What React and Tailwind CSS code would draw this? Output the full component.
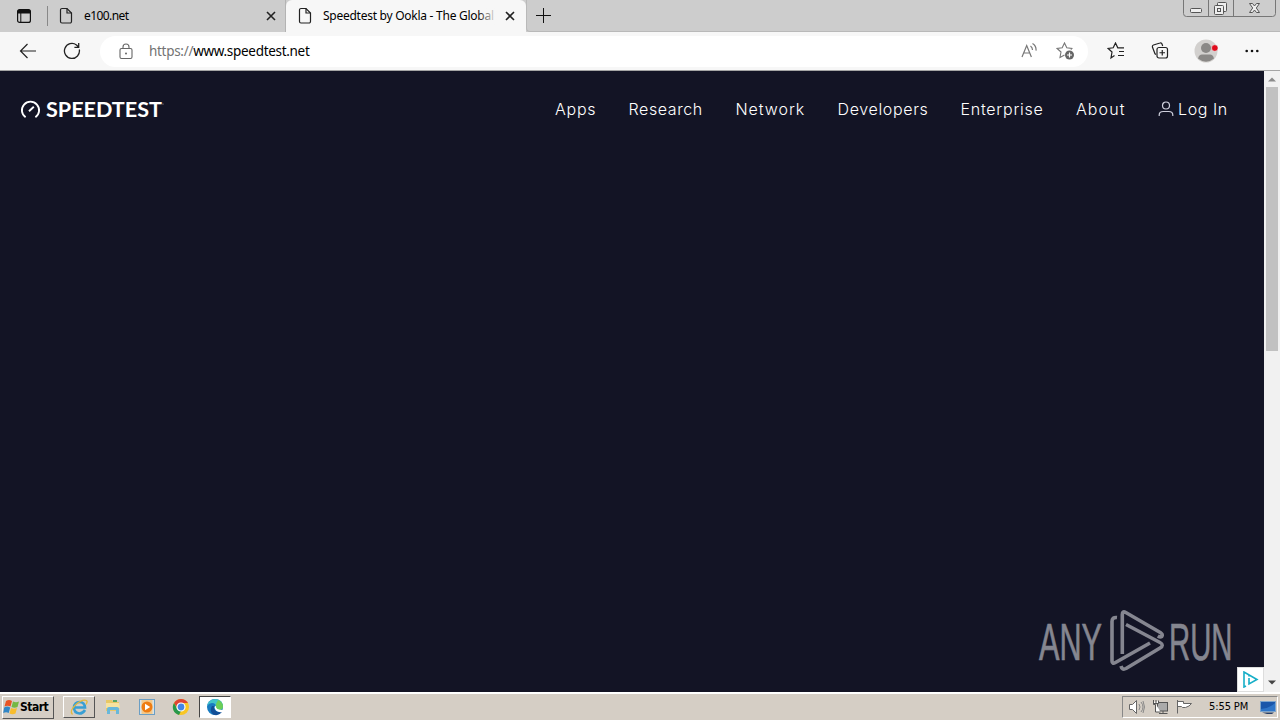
import React from "react";

const navItems = [
    { label: "Apps", width: "w-[73.5px]", tracking: "tracking-[0.75px]" },
    { label: "Research", width: "w-[107px]", tracking: "tracking-[0.6px]" },
    { label: "Network", width: "w-[102px]", tracking: "tracking-[0.95px]" },
    { label: "Developers", width: "w-[123px]", tracking: "tracking-[0.65px]" },
    { label: "Enterprise", width: "w-[115.5px]", tracking: "tracking-[0.75px]" },
    { label: "About", width: "w-[82px]", tracking: "tracking-[1.1px]" },
];

function PageIcon() {
    return (
        <svg className="shrink-0" width="14" height="18" viewBox="0 0 14 18" fill="none" stroke="#222" strokeWidth="1.2">
            <path d="M3 1.500h5l4.500 4.500v8.500a1.500 1.500 0 0 1-1.500 1.500H3a1.500 1.500 0 0 1-1.500-1.500V3A1.500 1.500 0 0 1 3 1.500z" />
            <path d="M8 1.500V6h4.500" />
        </svg>
    );
}

function CloseIcon() {
    return (
        <svg className="shrink-0" width="10" height="10" viewBox="0 0 10 10" stroke="#222" strokeWidth="1.6">
            <path d="M1 1l8 8M9 1L1 9" />
        </svg>
    );
}

function WindowButtons() {
    return (
        <svg className="ml-auto mr-1 shrink-0 self-start" width="93" height="18" viewBox="0 0 93 18" fill="none" stroke="#777">
            <path d="M.5 0v13.500a3 3 0 0 0 3 3h86a3 3 0 0 0 3-3V0M25.500 0v16M50.500 0v16" />
            <rect x="7.500" y="8.500" width="11" height="4" rx="1" fill="#eee" stroke="#555" />
            <g fill="#eee" stroke="#555">
                <rect x="34.500" y="2.500" width="9" height="9" rx="1" />
                <rect x="31.500" y="5.500" width="9" height="9" rx="1" />
                <rect x="34.500" y="8.500" width="3" height="3" />
            </g>
            <path d="M66.500 3.500h3l2 2.500 2-2.500h3l-3.200 4.500 3.200 4.500h-3l-2-2.500-2 2.500h-3l3.200-4.500z" fill="#eee" stroke="#555" />
        </svg>
    );
}

function TabStrip() {
    return (
        <div className="flex h-8 items-center bg-[#cdcdcd] text-[12px] text-black">
            <svg className="ml-4 shrink-0" width="16" height="16" viewBox="0 0 16 16">
                <rect x="1.600" y="1.600" width="12.800" height="12.800" rx="2" fill="none" stroke="#111" strokeWidth="1.200" />
                <path d="M1.500 5.500V3.500a2 2 0 0 1 2-2h9a2 2 0 0 1 2 2v2z" fill="#111" />
                <path d="M4.800 5v9" stroke="#111" />
            </svg>
            <div className="ml-[15px] h-5 w-px bg-[#888]" />
            <div className="flex h-full w-[238px] items-center border-r border-[#b3b3b3] pl-[11px]">
                <PageIcon />
                <span className="ml-[11px] w-[182px] tracking-[-0.58px]">e100.net</span>
                <CloseIcon />
            </div>
            <div className="flex h-full w-[240px] items-center rounded-t-md bg-[#f7f7f7] pl-[12px]">
                <PageIcon />
                <span className="relative ml-[11px] w-[174px] overflow-hidden whitespace-nowrap tracking-[-0.26px]">
                    Speedtest by Ookla - The Global I
                    <span className="absolute right-0 top-0 h-full w-5 bg-linear-to-r from-transparent to-[#f7f7f7]" />
                </span>
                <span className="ml-[8px]"><CloseIcon /></span>
            </div>
            <div className="flex h-full grow items-center rounded-bl border-b border-l border-[#b9b9b9]">
                <svg className="ml-[9px]" width="15" height="15" viewBox="0 0 15 15" stroke="#111">
                    <path d="M7.500 0v15M0 7.500h15" />
                </svg>
                <WindowButtons />
            </div>
        </div>
    );
}

function AddressBar() {
    return (
        <div className="flex h-[39px] items-center border-b border-[#a5a5a5] bg-[#f7f7f7]">
            <svg className="ml-[19px] shrink-0" width="18" height="16" viewBox="0 0 18 16" fill="none" stroke="#222" strokeWidth="1.200">
                <path d="M17 8H1.500M8.500 1L1.500 8l7 7" />
            </svg>
            <svg className="ml-[26px] shrink-0" width="18" height="18" viewBox="0 0 18 18" fill="none" stroke="#222" strokeWidth="1.300">
                <path d="M16.300 7.500A7.500 7.500 0 1 1 13.500 3l2 2M15.700 1v4.300h-4.300" />
            </svg>
            <div className="ml-[19px] flex h-[31px] w-[988px] items-center rounded-full bg-white">
                <svg className="ml-[19px] shrink-0" width="14" height="17" viewBox="0 0 14 17" fill="none" stroke="#666" strokeWidth="1.100">
                    <rect x="1" y="5.500" width="12" height="10" rx="1.500" />
                    <path d="M4 5.500V4a3 3 0 0 1 6 0v1.500" />
                    <circle cx="7" cy="10.500" r="1" fill="#666" stroke="none" />
                </svg>
                <span className="ml-4 text-[13.5px] tracking-[-0.3px] text-black">
                    <span className="text-[#737373]">https://</span>www.speedtest.net
                </span>
                <svg className="ml-auto shrink-0" width="17" height="16" viewBox="0 0 17 16" fill="none" stroke="#777" strokeWidth="1.200">
                    <path d="M2 14L6.700 2.500 11.400 14M3.600 10h6.200M10.500 3q2 1.500 2 4M12.500 .6q4 2.500 3.500 7" />
                </svg>
                <svg className="ml-[19px] mr-[13px] shrink-0" width="19" height="18" viewBox="0 0 19 18" fill="none" stroke="#777" strokeWidth="1.100">
                    <path d="M8.500 13L4 15.500l1-5.500-3.800-3.500 5-.7L8.500 1l2.300 4.800 5 .7-1 1" />
                    <circle cx="13.500" cy="13" r="4.500" fill="#666" stroke="none" />
                    <path d="M11 13h5M13.500 10.500v5" stroke="#fff" strokeWidth="1.200" />
                </svg>
            </div>
            <svg className="ml-[19px] shrink-0" width="19" height="18" viewBox="0 0 19 18" fill="none" stroke="#222" strokeWidth="1.200">
                <path d="M7.500 13.500L4 16l1-6-3.800-3.500 5-.7L8.500 1l2.300 4.800H17M12 9.500h5M11 13.500h6" />
            </svg>
            <svg className="ml-[25px] shrink-0" width="18" height="18" viewBox="0 0 18 18" fill="none" stroke="#222" strokeWidth="1.200">
                <path d="M5 12.500l-1-.7-2.500-6.500Q1 3.500 2.500 3L9 1q1.500-.5 2 1l.7 2" />
                <rect x="6" y="5.500" width="10.500" height="10.500" rx="2" />
                <path d="M11.250 8v5.500M8.500 10.750H14" />
            </svg>
            <svg className="ml-[25px] shrink-0" width="24" height="24" viewBox="0 0 24 24">
                <circle cx="12" cy="12" r="11.500" fill="#d2d0ce" />
                <circle cx="12" cy="9" r="5" fill="#8a8886" />
                <path d="M4 19.500Q5 15.500 8 15.500h8q3 0 4 4-8 6.500-16 0z" fill="#8a8886" />
                <circle cx="20.800" cy="9" r="3.300" fill="#e00b1c" stroke="#eee" strokeWidth=".6" />
            </svg>
            <svg className="ml-[27px]" width="14" height="4" viewBox="0 0 14 4" fill="#111">
                <circle cx="1.700" cy="2" r="1.300" />
                <circle cx="7" cy="2" r="1.300" />
                <circle cx="12.300" cy="2" r="1.300" />
            </svg>
        </div>
    );
}

function SiteHeader() {
    return (
        <header className="flex h-[78px] items-center text-white">
            <svg className="ml-5 overflow-visible" width="146" height="28" viewBox="0 -3 146 28" fill="none" stroke="#fff" strokeWidth="1.900">
                <path d="M5.600 18.300A8.600 8.600 0 1 1 15.400 18.300M9 12.300l4.800-4.600" />
                <text x="26" y="18" textLength="116" lengthAdjust="spacingAndGlyphs" fill="#fff" stroke="none" fontFamily="Lato, sans-serif" fontWeight="700" fontSize="20">SPEEDTEST</text>
                <circle cx="143" cy="5" r=".6" fill="#aaa" stroke="none" />
            </svg>
            <nav className="ml-auto flex items-center pb-0.5 font-['Inter',sans-serif] text-[16px] font-light">
                {navItems.map((item) =>
                    <a key={item.label} className={`${item.width} ${item.tracking}`}>{item.label}</a>
                )}
                <a className="flex w-[106px] items-center">
                    <svg className="mr-1 shrink-0" width="16" height="16" viewBox="0 0 16 16" fill="none" stroke="#cfd0dd" strokeWidth="1.200">
                        <circle cx="8" cy="4.500" r="3.500" />
                        <path d="M1.200 15v-1q0-3.500 4-3.500h5.600q4 0 4 3.500v1" />
                    </svg>
                    <span className="tracking-[0.6px]">Log In</span>
                </a>
            </nav>
        </header>
    );
}

function Watermark() {
    return (
        <svg className="absolute bottom-[18px] left-[1036px] overflow-visible" width="204" height="66" viewBox="1036 608 204 66">
            <g fill="#858690" stroke="#858690" strokeWidth=".7" fontFamily="'Liberation Sans Narrow', 'Liberation Sans', sans-serif" fontSize="52">
                <text x="1039" y="659.500" textLength="63" lengthAdjust="spacingAndGlyphs">ANY</text>
                <text x="1169" y="659.500" textLength="63.500" lengthAdjust="spacingAndGlyphs">RUN</text>
            </g>
            <g fill="none" stroke="#858690" strokeWidth="3.600" strokeLinejoin="round">
                <path d="M1117 617.500q-5-.5-5 4v39.500q0 3.500 3.500 1.500l34.500-19.500" />
                <path d="M1122.300 654v-39.500q0-4 3.500-2l34.500 20q3 2 1.500 4-1.500 1-4-.5" />
                <path d="M1126 624.500l34 18q4.500 2.500 0 5.500l-34 20.500q-4 2-5-2.500" />
            </g>
        </svg>
    );
}

function Scrollbar() {
    return (
        <div className="flex w-4 shrink-0 flex-col items-center bg-[#f1f1f1]">
            <svg width="16" height="16" viewBox="0 0 16 16"><path d="M4 10.500h8l-4-4z" fill="#8b8b8b" /></svg>
            <div className="h-[264px] w-3 bg-[#c1c1c1]" />
            <svg className="mt-auto" width="16" height="18" viewBox="0 0 16 18"><path d="M4 6.500h8l-4 4z" fill="#444" /></svg>
        </div>
    );
}

function WindowsLogo() {
    return (
        <svg className="shrink-0" width="17" height="17" viewBox="0 0 17 17">
            <path d="M3 2q3-2 6 0L7.500 7.500q-3-1.500-6 0z" fill="#e85324" />
            <path d="M10 2.500q3 1.500 6 0L14.500 8q-3 1.500-6 0z" fill="#75b843" />
            <path d="M1.200 8.500q3-2 6 0L5.700 14q-2.500-1.500-5.500 0z" fill="#3186c6" />
            <path d="M8 9q3 1.500 6 0l-1.500 5.500q-3 1.500-6 0z" fill="#f8bd2d" />
        </svg>
    );
}

function Taskbar() {
    return (
        <footer className="flex h-7 items-center border-t-2 border-white bg-[#d5cec5] font-['DejaVu_Sans_Condensed','DejaVu_Sans',sans-serif]">
            <div className="ml-[2px] flex h-[23px] w-[52px] items-center border border-b-[#555] border-l-white border-r-[#555] border-t-white">
                <WindowsLogo />
                <span className="text-[12px] font-bold tracking-[-0.5px] text-black">Start</span>
            </div>
            <div className="ml-[9px] flex h-[22px] w-8 items-center justify-center border border-b-[#555] border-l-white border-r-[#555] border-t-white">
                <svg width="18" height="18" viewBox="0 0 18 18" fill="none">
                    <path d="M15 12q-2 3.500-5.500 3.500-5.500-.5-5.500-6Q4.500 4 9.500 4t5.500 5.500H4.500" stroke="#389fd4" strokeWidth="2.600" />
                    <path d="M2.500 16.500Q-1 13 5.500 7t11-4.500q1.500 1-.5 4" stroke="#e3b93d" strokeWidth="1.300" />
                </svg>
            </div>
            <svg className="ml-[9px]" width="18" height="18" viewBox="0 0 18 18">
                <path d="M2 2h6l1 2h6v9H2z" fill="#e8c866" />
                <path d="M2 5h13l1 5H2z" fill="#f7e3a0" />
                <path d="M3 16v-5q0-2 2-2h8q2 0 2 2v5h-3v-4H6v4z" fill="#69b8da" />
                <path d="M9 3h4" stroke="#55a465" strokeWidth="2" />
            </svg>
            <svg className="ml-4" width="18" height="18" viewBox="0 0 18 18">
                <rect x="1.500" y="1.500" width="15" height="15" fill="#d6e2e8" stroke="#6b9ec4" />
                <rect x="3.500" y="2" width="11" height="14" fill="#f3c98c" />
                <circle cx="9" cy="9" r="5.500" fill="#ee7c12" />
                <path d="M7 5.800v6.400L12.200 9z" fill="#fff" />
            </svg>
            <svg className="ml-4" width="18" height="18" viewBox="0 0 18 18">
                <circle cx="9" cy="9" r="8" fill="#f9c623" />
                <path d="M2 5Q4.500 1 9 1t7 4H9L6 11z" fill="#df4435" />
                <path d="M2 5l4 7 3 1-2 4A8 8 0 0 1 2 5z" fill="#27984b" />
                <circle cx="9" cy="9" r="4" fill="#4285e8" stroke="#fff" strokeWidth="1.200" />
            </svg>
            <div className="ml-[9px] flex h-[22px] w-8 items-center justify-center border border-b-white border-l-[#444] border-r-white border-t-[#444] bg-white">
                <svg width="18" height="18" viewBox="0 0 18 18">
                    <circle cx="9" cy="9" r="8" fill="#187bc0" />
                    <path d="M1 8q1-6 8-7 7 0 8 7 0 4-5 4-3 0-2-3 0-4-4-4-3 0-5 3z" fill="#42c4c9" />
                    <path d="M12 2q5 2 5 6.500 0 3.500-5 3.500-2 0-2-2V6z" fill="#6bce59" />
                    <path d="M8 8q-1 7 8 6-4 5-9 2.500Q3 13 6 8z" fill="#124e96" />
                    <path d="M10 7.500q-1 4.500 7.500 4.500l-1 2Q9 15 8.500 9z" fill="#fff" />
                </svg>
            </div>
            <div className="ml-auto mr-[2px] flex h-[22px] w-[156px] items-center border border-b-white border-l-[#888] border-r-white border-t-[#888]">
                <svg className="ml-[5px] shrink-0" width="66" height="18" viewBox="0 0 66 18" fill="#fff" stroke="#666">
                    <path d="M1.500 6.500h3l4-4v13l-4-4h-3z" />
                    <path d="M11 6q2 3 0 6M13 4q4 5 0 10M15 3q3 6 0 12" fill="none" stroke="#888" />
                    <rect x="29.500" y="4.500" width="10" height="8.500" fill="#aaa" stroke="#555" />
                    <path d="M25.500 2v4.500h2V14h5M25.500 5.500h5V2.500M28 2v3M31 15.500h8.500M35 13v2" stroke="#555" />
                    <path d="M49.500 2v13.500M49.500 3.500h6v2h8q-2 3-6 4h-3l-1-1h-4z" />
                </svg>
                <span className="ml-[15px] whitespace-nowrap text-[11px] tracking-[-0.1px] text-black">5:55 PM</span>
                <svg className="ml-auto mr-px shrink-0" width="16" height="15" viewBox="0 0 16 15">
                    <rect x=".5" y="1.500" width="15" height="10" fill="#1956aa" stroke="#7ca4cc" />
                    <path d="M1 9q9-1 14-6v8H1z" fill="#2e75c8" />
                    <path d="M2 12.500h12l-2 1.500H7z" fill="#263e67" />
                </svg>
            </div>
        </footer>
    );
}

export default function App() {
    return (
        <div className="flex h-[720px] w-[1280px] flex-col overflow-hidden font-['Noto_Sans','Open_Sans',sans-serif]">
            <TabStrip />
            <AddressBar />
            <div className="flex min-h-0 grow">
                <main className="relative grow bg-[#131425]">
                    <SiteHeader />
                    <Watermark />
                    <div className="absolute bottom-0 right-0 flex h-[25px] w-[27px] items-center justify-center border border-[#ddd] bg-white">
                        <svg width="17" height="17" viewBox="0 0 17 17" fill="none" stroke="#16aec7" strokeWidth="1.600">
                            <path d="M4 15L2 16V1l13 7.500L7 13V7M7 3.500v2" />
                        </svg>
                    </div>
                </main>
                <Scrollbar />
            </div>
            <Taskbar />
        </div>
    );
}
